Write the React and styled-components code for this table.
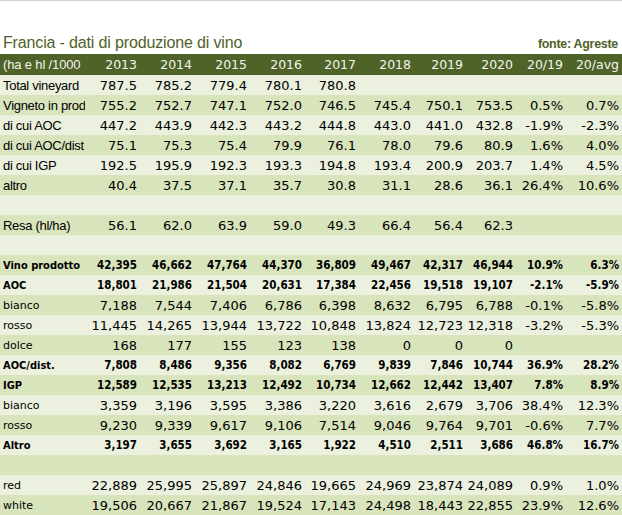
import * as React from "react";
import styled, { createGlobalStyle } from "styled-components";

const GlobalStyle = createGlobalStyle`
  html, body {
    margin: 0;
    padding: 0;
    background: #ffffff;
  }
`;

const COLUMNS = "85px 55px 55px 55px 55px 54px 55px 52px 50px 50px 56px";

const header = ["2013", "2014", "2015", "2016", "2017", "2018", "2019", "2020", "20/19", "20/avg"];

const rows = [
  { label: "Total vineyard", kind: "area", values: ["787.5", "785.2", "779.4", "780.1", "780.8"] },
  { label: "Vigneto in prod", kind: "area", values: ["755.2", "752.7", "747.1", "752.0", "746.5", "745.4", "750.1", "753.5", "0.5%", "0.7%"] },
  { label: "di cui AOC", kind: "area", values: ["447.2", "443.9", "442.3", "443.2", "444.8", "443.0", "441.0", "432.8", "-1.9%", "-2.3%"] },
  { label: "di cui AOC/dist", kind: "area", values: ["75.1", "75.3", "75.4", "79.9", "76.1", "78.0", "79.6", "80.9", "1.6%", "4.0%"] },
  { label: "di cui IGP", kind: "area", values: ["192.5", "195.9", "192.3", "193.3", "194.8", "193.4", "200.9", "203.7", "1.4%", "4.5%"] },
  { label: "altro", kind: "area", values: ["40.4", "37.5", "37.1", "35.7", "30.8", "31.1", "28.6", "36.1", "26.4%", "10.6%"] },
  { label: "", kind: "area", values: [] },
  { label: "Resa (hl/ha)", kind: "area", values: ["56.1", "62.0", "63.9", "59.0", "49.3", "66.4", "56.4", "62.3"] },
  { label: "", kind: "area", values: [] },
  { label: "Vino prodotto", kind: "bold", values: ["42,395", "46,662", "47,764", "44,370", "36,809", "49,467", "42,317", "46,944", "10.9%", "6.3%"] },
  { label: "AOC", kind: "bold", values: ["18,801", "21,986", "21,504", "20,631", "17,384", "22,456", "19,518", "19,107", "-2.1%", "-5.9%"] },
  { label: "bianco", kind: "plain", values: ["7,188", "7,544", "7,406", "6,786", "6,398", "8,632", "6,795", "6,788", "-0.1%", "-5.8%"] },
  { label: "rosso", kind: "plain", values: ["11,445", "14,265", "13,944", "13,722", "10,848", "13,824", "12,723", "12,318", "-3.2%", "-5.3%"] },
  { label: "dolce", kind: "plain", values: ["168", "177", "155", "123", "138", "0", "0", "0"] },
  { label: "AOC/dist.", kind: "bold", values: ["7,808", "8,486", "9,356", "8,082", "6,769", "9,839", "7,846", "10,744", "36.9%", "28.2%"] },
  { label: "IGP", kind: "bold", values: ["12,589", "12,535", "13,213", "12,492", "10,734", "12,662", "12,442", "13,407", "7.8%", "8.9%"] },
  { label: "bianco", kind: "plain", values: ["3,359", "3,196", "3,595", "3,386", "3,220", "3,616", "2,679", "3,706", "38.4%", "12.3%"] },
  { label: "rosso", kind: "plain", values: ["9,230", "9,339", "9,617", "9,106", "7,514", "9,046", "9,764", "9,701", "-0.6%", "7.7%"] },
  { label: "Altro", kind: "bold", values: ["3,197", "3,655", "3,692", "3,165", "1,922", "4,510", "2,511", "3,686", "46.8%", "16.7%"] },
  { label: "", kind: "plain", values: [] },
  { label: "red", kind: "plain", values: ["22,889", "25,995", "25,897", "24,846", "19,665", "24,969", "23,874", "24,089", "0.9%", "1.0%"] },
  { label: "white", kind: "plain", values: ["19,506", "20,667", "21,867", "19,524", "17,143", "24,498", "18,443", "22,855", "23.9%", "12.6%"] },
];

const App = () => {
  return (
    <Sheet>
      <GlobalStyle />
      <TitleBar>
        <Title>Francia - dati di produzione di vino</Title>
        <Source>fonte: Agreste</Source>
      </TitleBar>
      <HeaderRow>
        <HeaderLabel>(ha e hl /1000</HeaderLabel>
        {header.map((h) => (
          <HeaderCell key={h}>{h}</HeaderCell>
        ))}
      </HeaderRow>
      {rows.map((row, i) => (
        <Row key={i} $dark={i % 2 === 1}>
          <Label $kind={row.kind}>{row.label}</Label>
          {header.map((h, j) => (
            <Value key={h} $bold={row.kind === "bold"}>
              {row.values[j] || ""}
            </Value>
          ))}
        </Row>
      ))}
    </Sheet>
  );
};

const Sheet = styled.div`
  width: 622px;
  height: 515px;
  overflow: hidden;
  border-top: 1px solid #d2d2d2;
  box-sizing: border-box;
  color: #000;
`;

const TitleBar = styled.div`
  height: 53px;
  display: flex;
  justify-content: space-between;
  align-items: flex-end;
  padding: 0 4px 2px 3px;
  box-sizing: border-box;
`;

const Title = styled.div`
  font-family: "Liberation Sans", sans-serif;
  font-size: 16px;
  letter-spacing: -0.15px;
  line-height: 19px;
  color: #4f6228;
`;

const Source = styled.div`
  font-family: "Liberation Sans", sans-serif;
  font-weight: bold;
  font-size: 12.5px;
  letter-spacing: -0.3px;
  line-height: 16px;
  color: #4f6228;
`;

const HeaderRow = styled.div`
  display: grid;
  grid-template-columns: ${COLUMNS};
  height: 21px;
  background: #4f6228;
  color: #f4f4ee;
`;

const HeaderLabel = styled.div`
  font-family: "Liberation Sans", sans-serif;
  font-size: 13px;
  letter-spacing: -0.15px;
  line-height: 21px;
  padding-left: 3px;
  white-space: nowrap;
  overflow: hidden;
`;

const HeaderCell = styled.div`
  font-family: "DejaVu Sans", sans-serif;
  font-size: 12.5px;
  line-height: 21px;
  text-align: right;
  padding-right: 3px;
  white-space: nowrap;
`;

const Row = styled.div`
  display: grid;
  grid-template-columns: ${COLUMNS};
  height: 20px;
  background: ${(p) => (p.$dark ? "#d8e4bc" : "#ebf1de")};
`;

const labelFonts = {
  area: `
    font-family: "Liberation Sans", sans-serif;
    font-size: 13px;
    letter-spacing: -0.3px;
  `,
  plain: `
    font-family: "DejaVu Sans", sans-serif;
    font-size: 11px;
  `,
  bold: `
    font-family: "DejaVu Sans Condensed", "DejaVu Sans", sans-serif;
    font-weight: bold;
    font-size: 11px;
  `,
};

const Label = styled.div`
  ${(p) => labelFonts[p.$kind]}
  line-height: 21px;
  padding-left: 3px;
  white-space: nowrap;
  overflow: hidden;
`;

const Value = styled.div`
  font-family: ${(p) => (p.$bold ? '"DejaVu Sans Condensed", "DejaVu Sans", sans-serif' : '"DejaVu Sans", sans-serif')};
  font-weight: ${(p) => (p.$bold ? "bold" : "normal")};
  font-size: ${(p) => (p.$bold ? "11.5px" : "13px")};
  line-height: 21px;
  text-align: right;
  padding-right: 3px;
  white-space: nowrap;
`;

export default App;
